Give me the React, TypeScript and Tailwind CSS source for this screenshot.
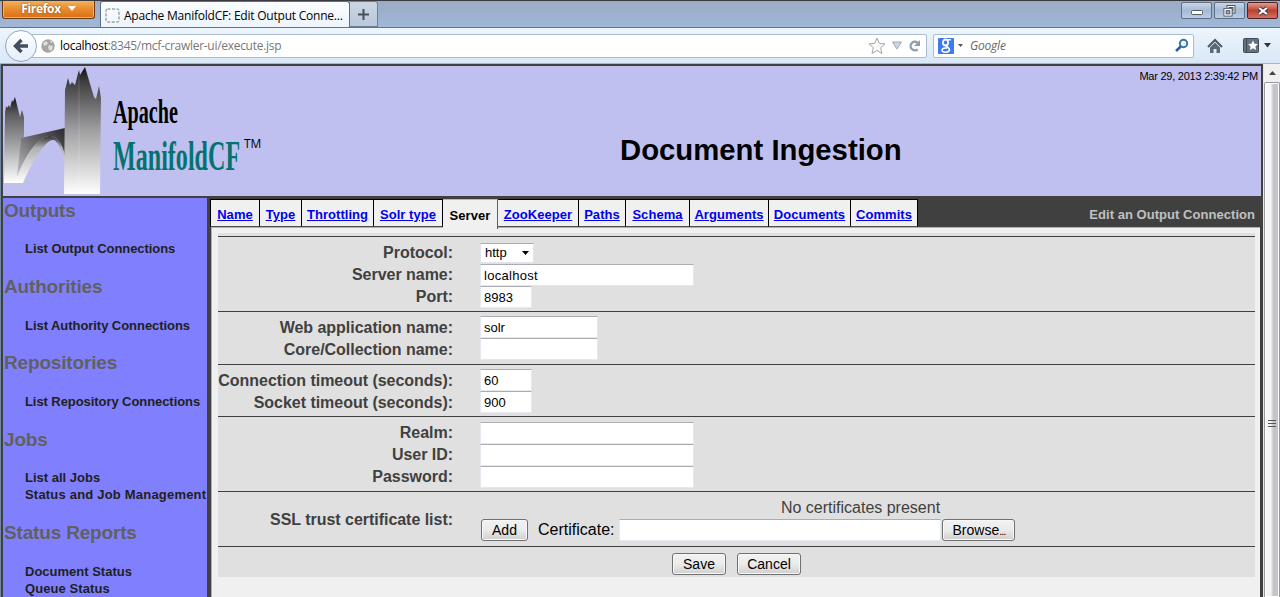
import React from 'react';

const ARIAL = "font-['Liberation_Sans',Arial,sans-serif]";
const UI = "font-['Open_Sans','Noto_Sans',sans-serif]";

function TitleBar() {
  return (
    <div className="flex h-[27px] shrink-0 border-t border-[#3a3a40] bg-linear-to-b from-[#9aabc4] to-[#a0b8d8]">
      <div className="ml-[2px] flex h-[18px] w-[93px] justify-center gap-[7px] rounded-b-[3px] border border-t-0 border-[#6b3a10] bg-linear-to-b from-[#f2b056] via-[#e88a2c] to-[#da6d12] shadow-[inset_0_0_0_1px_#f3b366]">
        <span className={`${UI} text-[12px] leading-[15px] font-bold tracking-[-0.3px] text-white [text-shadow:0_0_2px_#70400f]`}>Firefox</span>
        <svg className="mt-[5px]" width="8" height="6"><path d="M0 0h8L4 5z" fill="#fff" /></svg>
      </div>
      <div className="ml-[5px] flex h-[26px] w-[250px] rounded-t-[3px] border border-b-0 border-[#5c6f87] bg-linear-to-b from-[#fbfdff] to-[#edf4fc]">
        <svg className="ml-[4px] mt-[6px]" width="15" height="15">
          <rect x="1" y="1" width="13" height="13" rx="1.5" fill="none" stroke="#777" strokeDasharray="3 1.5" />
        </svg>
        <span className={`${UI} ml-[4px] whitespace-nowrap text-[12px] leading-[27px] tracking-[-0.22px] text-black`}>Apache ManifoldCF: Edit Output Conne...</span>
      </div>
      <div className="flex h-[26px] w-[28px] items-center justify-center rounded-tr-[3px] border border-l-0 border-[#6e8098] bg-linear-to-b from-[#ccd5e2] to-[#bac8da]">
        <svg width="11" height="11"><path d="M5.5 0v11M0 5.5h11" stroke="#45505e" strokeWidth="2" /></svg>
      </div>
      <div className="ml-auto mr-[2px] mt-px flex gap-[2px]">
        <div className="flex h-[17px] w-[31px] items-center justify-center rounded-[2px] border border-[#5e6f88] bg-linear-to-b from-[#c8d5e6] via-[#a6bad4] to-[#b7cce6]">
          <svg className="mt-[4px]" width="12" height="5"><rect x=".5" y=".5" width="11" height="4" rx="1" fill="#fff" stroke="#555b66" /></svg>
        </div>
        <div className="flex h-[17px] w-[31px] items-center justify-center rounded-[2px] border border-[#5e6f88] bg-linear-to-b from-[#c8d5e6] via-[#a6bad4] to-[#b7cce6]">
          <svg width="13" height="12">
            <rect x="5" y="1.500" width="6" height="5.500" fill="none" stroke="#4c5360" strokeWidth="3" />
            <rect x="5" y="1.500" width="6" height="5.500" fill="none" stroke="#fff" />
            <rect x="2" y="4.500" width="6" height="5.500" fill="#8fa3bd" stroke="#4c5360" strokeWidth="3" />
            <rect x="2" y="4.500" width="6" height="5.500" fill="none" stroke="#fff" strokeWidth="1.300" />
          </svg>
        </div>
        <div className="flex h-[17px] w-[31px] items-center justify-center rounded-[2px] border border-[#50202a] bg-linear-to-b from-[#dc9c92] via-[#bd4030] to-[#d27060]">
          <svg width="12" height="10">
            <path d="M2 2l8 6M10 2l-8 6" stroke="#4d3a42" strokeWidth="4.2" />
            <path d="M2.2 2l7.6 6M9.8 2l-7.6 6" stroke="#fff" strokeWidth="2.2" />
          </svg>
        </div>
      </div>
    </div>
  );
}

function NavBar() {
  return (
    <div className="flex h-[37px] shrink-0 items-center border-y border-t-[#5f738c] border-b-[#a5b6c8] bg-linear-to-b from-[#edf5fd] to-[#d9e7f6]">
      <div className="z-10 ml-[5px] flex h-[32px] w-[32px] shrink-0 items-center justify-center rounded-full border border-[#93a6bc] bg-linear-to-b from-white to-[#e4eefa]">
        <svg width="18" height="18"><path d="M16 9H4M9.5 3L3.5 9l6 6" fill="none" stroke="#414e5c" strokeWidth="3.4" /></svg>
      </div>
      <div className="-ml-[7px] flex h-[24px] w-[897px] items-center rounded-r-[2px] border border-[#a9bccf] bg-white">
        <svg className="ml-[10px]" width="14" height="14">
          <circle cx="7" cy="7" r="6.7" fill="#a3a3a3" />
          <path d="M2 4l3-2 2 2-1 2-3 1zM8 6l4 1-1 4-2 1-2-3zM9 1l3 2-2 1z" fill="#dedede" />
        </svg>
        <span className={`${UI} ml-[5px] text-[12px] leading-[20px] tracking-[-0.29px] text-[#777]`}><span className="text-black">localhost</span>:8345/mcf-crawler-ui/execute.jsp</span>
        <svg className="ml-auto" width="18" height="18"><path d="M9 1l2.3 5.4 5.7.5-4.3 3.8 1.3 5.8L9 13.4l-5 3.1 1.3-5.8L1 6.9l5.7-.5z" fill="#fafafa" stroke="#a2a7ad" /></svg>
        <svg className="ml-[6px]" width="10" height="9"><path d="M.5 1h9L5 8z" fill="#cdd6df" stroke="#9daab8" /></svg>
        <svg className="ml-[6px] mr-[5px]" width="13" height="14">
          <path d="M9.7 10.3A4.3 4.3 0 1 1 9.5 3.6" fill="none" stroke="#8d9cab" strokeWidth="2.3" />
          <path d="M12 1v6H6z" fill="#8d9cab" />
        </svg>
      </div>
      <div className="ml-[6px] flex h-[24px] w-[261px] items-center rounded-[2px] border border-[#a9bccf] bg-white">
        <div className="ml-[4px] flex h-[16px] w-[16px] items-center justify-center rounded-[1px] bg-[#3f79f2]">
          <svg width="12" height="16" fill="none" stroke="#fff">
            <ellipse cx="5.5" cy="4.5" rx="2.6" ry="3" strokeWidth="1.8" />
            <path d="M7 1.7h4M6.5 7.2C5 8.7 9.5 9 9.5 11.8c0 3-7.5 3.2-7.5.5 0-2 3-2.5 5-2.2" strokeWidth="1.6" />
          </svg>
        </div>
        <svg className="ml-[4px]" width="5" height="4"><path d="M0 0h5L2.500 3z" fill="#555" /></svg>
        <span className={`${UI} ml-[7px] text-[12px] leading-[20px] tracking-[-0.2px] italic text-[#666]`}>Google</span>
        <svg className="ml-auto mr-[4px]" width="15" height="15"><circle cx="9.500" cy="5.500" r="3.700" fill="#eef6fd" stroke="#3a74ab" strokeWidth="2" /><path d="M6.800 8.500L2 13" stroke="#2c5f93" strokeWidth="2.500" /></svg>
      </div>
      <svg className="ml-[13px]" width="16" height="16">
        <path d="M1 9l7-7 7 7" fill="none" stroke="#4b5765" strokeWidth="2" />
        <path d="M3 9.500l5-5 5 5V15H9.500v-4h-3v4H3z" fill="#5d6976" />
      </svg>
      <svg className="ml-[20px]" width="16" height="15">
        <rect x=".5" y=".5" width="15" height="14" rx="1" fill="#647180" stroke="#414c59" />
        <path d="M3.500 1v13" stroke="#414c59" />
        <path d="M10 2.500l1.500 3.200 3.500.4-2.600 2.400.7 3.500-3.100-1.800L6.900 12l.7-3.500L5 6.100l3.500-.4z" fill="#fff" />
      </svg>
      <svg className="ml-[5px]" width="7" height="5"><path d="M0 0h7L3.500 4.500z" fill="#333" /></svg>
    </div>
  );
}

function Logo() {
  return (
    <div className="flex h-[130px] w-[270px] shrink-0">
      <svg width="102" height="130" className="shrink-0">
        <defs>
          <linearGradient id="tall" x1="0" y1="0" x2="0" y2="1">
            <stop offset="0" stopColor="#111" /><stop offset=".12" stopColor="#404042" /><stop offset=".5" stopColor="#a0a0a2" /><stop offset="1" stopColor="#fff" />
          </linearGradient>
          <linearGradient id="short" x1="0" y1="0" x2="0" y2="1">
            <stop offset="0" stopColor="#111" /><stop offset=".2" stopColor="#5c5c5e" /><stop offset=".6" stopColor="#ababad" /><stop offset="1" stopColor="#fff" />
          </linearGradient>
          <linearGradient id="deck" x1="1" y1="0" x2="0" y2="1">
            <stop offset="0" stopColor="#2a2a2c" /><stop offset=".5" stopColor="#6e6e70" /><stop offset="1" stopColor="#c4c4c6" />
          </linearGradient>
          <linearGradient id="arch" x1="0" y1="0" x2="0" y2="1">
            <stop offset="0" stopColor="#333" /><stop offset=".25" stopColor="#b0b0b2" /><stop offset="1" stopColor="#fff" />
          </linearGradient>
        </defs>
        <path d="M1 117L2 47 3 40 4 42 6 39 7 42 9 34 10 36 12 31 17 51 19 44 21 51V71L18 73 14 117z" fill="url(#short)" />
        <path d="M18 72L62 62V91C60 80 55 70 47 70 35 70 22 90 14 111z" fill="url(#deck)" />
        <path d="M14 111C22 90 35 70 47 70 55 70 60 80 62 90V94C58 82 54 74 50 74 42 74 28 98 20 117H13z" fill="url(#arch)" />
        <path d="M61 128L62 24 65 12 67 19 69 16 72 19 76 4 77 9 82 1 91 31 93 33 96 20 98 32 97 128z" fill="url(#tall)" />
        <path d="M75 8l2 1v119h-2z" fill="#fff" opacity=".08" />
      </svg>
      <div className="ml-[8px] pt-[24px] font-['Liberation_Serif',serif] font-bold whitespace-nowrap">
        <div className="h-[41px] w-[66px] origin-left scale-x-[0.593] text-[34px] leading-[44px] text-black">Apache</div>
        <div className="flex">
          <div className="h-[46px] w-[128px] origin-left text-[43px] leading-[50px] text-[#04736e]">
            <div className="w-[128px] origin-left scale-x-[0.56]">ManifoldCF</div>
          </div>
          <div className="ml-[3px] mt-[5px] font-['Open_Sans',sans-serif] text-[12px] leading-[16px] font-normal text-black">TM</div>
        </div>
      </div>
    </div>
  );
}

const menu = [
  { title: 'Outputs', h: 'h-[76px]', gap: 'h-[42px]', items: [['List Output Connections', 'tracking-[-0.06px]']] },
  { title: 'Authorities', h: 'h-[76px]', gap: 'h-[43px]', items: [['List Authority Connections', 'tracking-[-0.05px]']] },
  { title: 'Repositories', h: 'h-[77px]', gap: 'h-[43px]', items: [['List Repository Connections', 'tracking-[-0.07px]']] },
  { title: 'Jobs', h: 'h-[93px]', gap: 'h-[42px]', items: [['List all Jobs', 'tracking-[0px]'], ['Status and Job Management', 'tracking-[0.2px]']] },
  { title: 'Status Reports', h: 'h-[93px]', gap: 'h-[43px]', items: [['Document Status', 'tracking-[0px]'], ['Queue Status', 'tracking-[0.08px]']] },
];

function Sidebar() {
  return (
    <nav className="flex w-[204px] shrink-0 flex-col bg-[#8080ff] pl-px">
      {menu.map((g) => (
        <section key={g.title} className={`${g.h} shrink-0`}>
          <h2 className={`${g.gap} text-[19px] leading-[26px] font-bold tracking-[-0.17px] text-[#606060]`}>{g.title}</h2>
          {g.items.map(([t, track]) => (
            <a key={t} className={`${track} block h-[17px] pl-[21px] text-[13px] leading-[17px] font-bold whitespace-nowrap text-[#202020]`}>{t}</a>
          ))}
        </section>
      ))}
    </nav>
  );
}

const tabs = [
  ['Name', 'w-[49px]'], ['Type', 'w-[42px]'], ['Throttling', 'w-[72px]'], ['Solr type', 'w-[69px]'], ['Server', 'w-[55px]'],
  ['ZooKeeper', 'w-[81px]'], ['Paths', 'w-[47px]'], ['Schema', 'w-[64px]'], ['Arguments', 'w-[79px]'], ['Documents', 'w-[82px]'], ['Commits', 'w-[67px]'],
];

function Tabs() {
  return (
    <div className="flex h-[29px] bg-[#404040] pt-px">
      <div className="flex border-l border-black">
        {tabs.map(([t, w]) =>
          t === 'Server' ? (
            <div key={t} className={`${w} z-10 h-[30px] border-t border-r border-t-[#b8b8b8] border-r-[#606060] bg-[#f0f0f0] text-center text-[13px] leading-[31px] font-bold tracking-[0.1px] text-black`}>{t}</div>
          ) : (
            <div key={t} className={`${w} h-[28px] border-t border-r border-b border-black border-b-[#505050] bg-[#f0f0f0] text-center text-[13px] leading-[29px] font-bold tracking-[0.06px] text-[#0000ee] underline`}>{t}</div>
          )
        )}
      </div>
      <div className="ml-auto pr-[6px] text-[13px] leading-[31px] font-bold tracking-[0.04px] text-[#c0c0c0]">Edit an Output Connection</div>
    </div>
  );
}

function Field({ label, w, value, lead = 'leading-[21px]' }: { label: string; w: string; value?: string; lead?: string }) {
  return (
    <div className="flex h-[22px] items-start">
      <div className={`${lead} flex w-[235px] shrink-0 justify-end text-[16px] font-bold tracking-[-0.03px] whitespace-nowrap text-[#404040]`}>{label}</div>
      {value === 'http' ? (
        <div className="ml-[27px] mt-px flex h-[20px] w-[54px] items-center border border-[#e3e3ea] border-t-[#abadb3] bg-white pl-[4px] text-[13px] text-black">
          http
          <svg className="ml-auto mr-[4px]" width="7" height="4"><path d="M0 0h7L3.500 4z" /></svg>
        </div>
      ) : (
        <div className={`${w} ml-[27px] h-[22px] border border-[#e3e9ef] border-t-[#abadb3] bg-white pl-[3px] text-[13px] leading-[21px] text-black ${value === 'localhost' ? 'tracking-[0.3px]' : ''}`}>{value}</div>
      )}
    </div>
  );
}

function Button({ children, w }: { children: React.ReactNode; w: string }) {
  return (
    <button className={`${w} h-[22px] shrink-0 rounded-[3px] border border-[#707070] bg-linear-to-b from-[#f2f2f2] from-0% via-[#ebebeb] via-50% to-[#cfcfcf] text-[14px] leading-[20px] text-black shadow-[inset_0_0_0_1px_#f8f8f8]`}>{children}</button>
  );
}

function Form() {
  return (
    <div className="mr-[4px] ml-[6px] mt-[5px] flex h-[344px] w-[1037px] flex-col bg-[#e0e0e0] pt-[3px]">
      <div className="h-[75px] border-t border-[#404040] pt-[5px]">
        <Field label="Protocol:" w="w-[54px]" value="http" />
        <Field label="Server name:" w="w-[214px]" value="localhost" />
        <Field label="Port:" w="w-[52px]" value="8983" />
      </div>
      <div className="h-[53px] border-t border-[#404040] pt-[4px]">
        <Field label="Web application name:" w="w-[118px]" value="solr" lead="leading-[23px]" />
        <Field label="Core/Collection name:" w="w-[118px]" lead="leading-[23px]" />
      </div>
      <div className="h-[52px] border-t border-[#404040] pt-[4px]">
        <Field label="Connection timeout (seconds):" w="w-[52px]" value="60" lead="leading-[23px]" />
        <Field label="Socket timeout (seconds):" w="w-[52px]" value="900" lead="leading-[23px]" />
      </div>
      <div className="h-[75px] border-t border-[#404040] pt-[5px]">
        <Field label="Realm:" w="w-[214px]" />
        <Field label="User ID:" w="w-[214px]" />
        <Field label="Password:" w="w-[214px]" />
      </div>
      <div className="flex h-[55px] border-t border-[#404040]">
        <div className="w-[235px] shrink-0 pt-[17px] text-right text-[16px] leading-[22px] font-bold tracking-[-0.03px] text-[#404040]">SSL trust certificate list:</div>
        <div className="ml-[27px] grow pt-[5px]">
          <div className="w-[761px] text-center text-[16px] leading-[21px] text-[#404040]">No certificates present</div>
          <div className="flex pl-px">
            <Button w="w-[47px] mt-px">Add</Button>
            <span className="ml-[10px] text-[16px] leading-[23px] text-black">Certificate:</span>
            <div className="ml-[5px] mt-px h-[22px] w-[322px] border border-[#e3e9ef] border-t-[#abadb3] bg-white" />
            <Button w="w-[73px] mt-px ml-px">Browse<span className="text-[11px] tracking-[-1px]">...</span></Button>
          </div>
        </div>
      </div>
      <div className="flex justify-center gap-[11px] border-t border-[#404040] pt-[6px]">
        <Button w="w-[54px]">Save</Button>
        <Button w="w-[64px]">Cancel</Button>
      </div>
    </div>
  );
}

function Scrollbar() {
  return (
    <div className="flex w-[16px] shrink-0 flex-col bg-[#f0f0f0]">
      <div className="flex h-[18px] shrink-0 items-center justify-center"><svg width="7" height="4"><path d="M0 4h7L3.500 0z" fill="#444" /></svg></div>
      <div className="flex grow items-start justify-center rounded-t-[2px] border border-b-0 border-[#979797] bg-linear-to-r from-[#f5f5f5] from-40% to-[#c4c4ca] to-60% shadow-[inset_0_0_0_1px_#fff]">
        <svg className="mt-[336px]" width="8" height="9"><path d="M0 1.500h8M0 4.500h8M0 7.500h8" stroke="#555" /></svg>
      </div>
    </div>
  );
}

export default function App() {
  return (
    <div className={`${ARIAL} flex h-[597px] w-[1280px] flex-col overflow-hidden bg-[#b9d0ea]`}>
      <TitleBar />
      <NavBar />
      <div className="flex h-[533px] shrink-0">
        <div className="w-px shrink-0 bg-[#6f86a5]" />
        <div className="flex w-[1262px] shrink-0 flex-col border-2 border-b-0 border-[#404040] bg-[#404040]">
          <header className="flex h-[130px] shrink-0 bg-[#c0c0f0]">
            <Logo />
            <h1 className="ml-[347px] pt-[66px] text-[29.3px] leading-[36px] font-bold whitespace-nowrap text-black">Document Ingestion</h1>
            <div className="ml-auto pt-[3px] pr-[3px] text-right text-[11px] leading-[14px] tracking-[-0.24px] text-black">Mar 29, 2013 2:39:42 PM</div>
          </header>
          <div className="mt-[2px] flex grow">
            <Sidebar />
            <main className="ml-[3px] flex grow flex-col">
              <Tabs />
              <div className="ml-px mr-px grow border-t border-l border-[#b0b0b0] bg-[#f0f0f0]">
                <Form />
              </div>
            </main>
          </div>
        </div>
        <div className="w-px shrink-0 bg-[#e8e8e8]" />
        <Scrollbar />
      </div>
    </div>
  );
}
